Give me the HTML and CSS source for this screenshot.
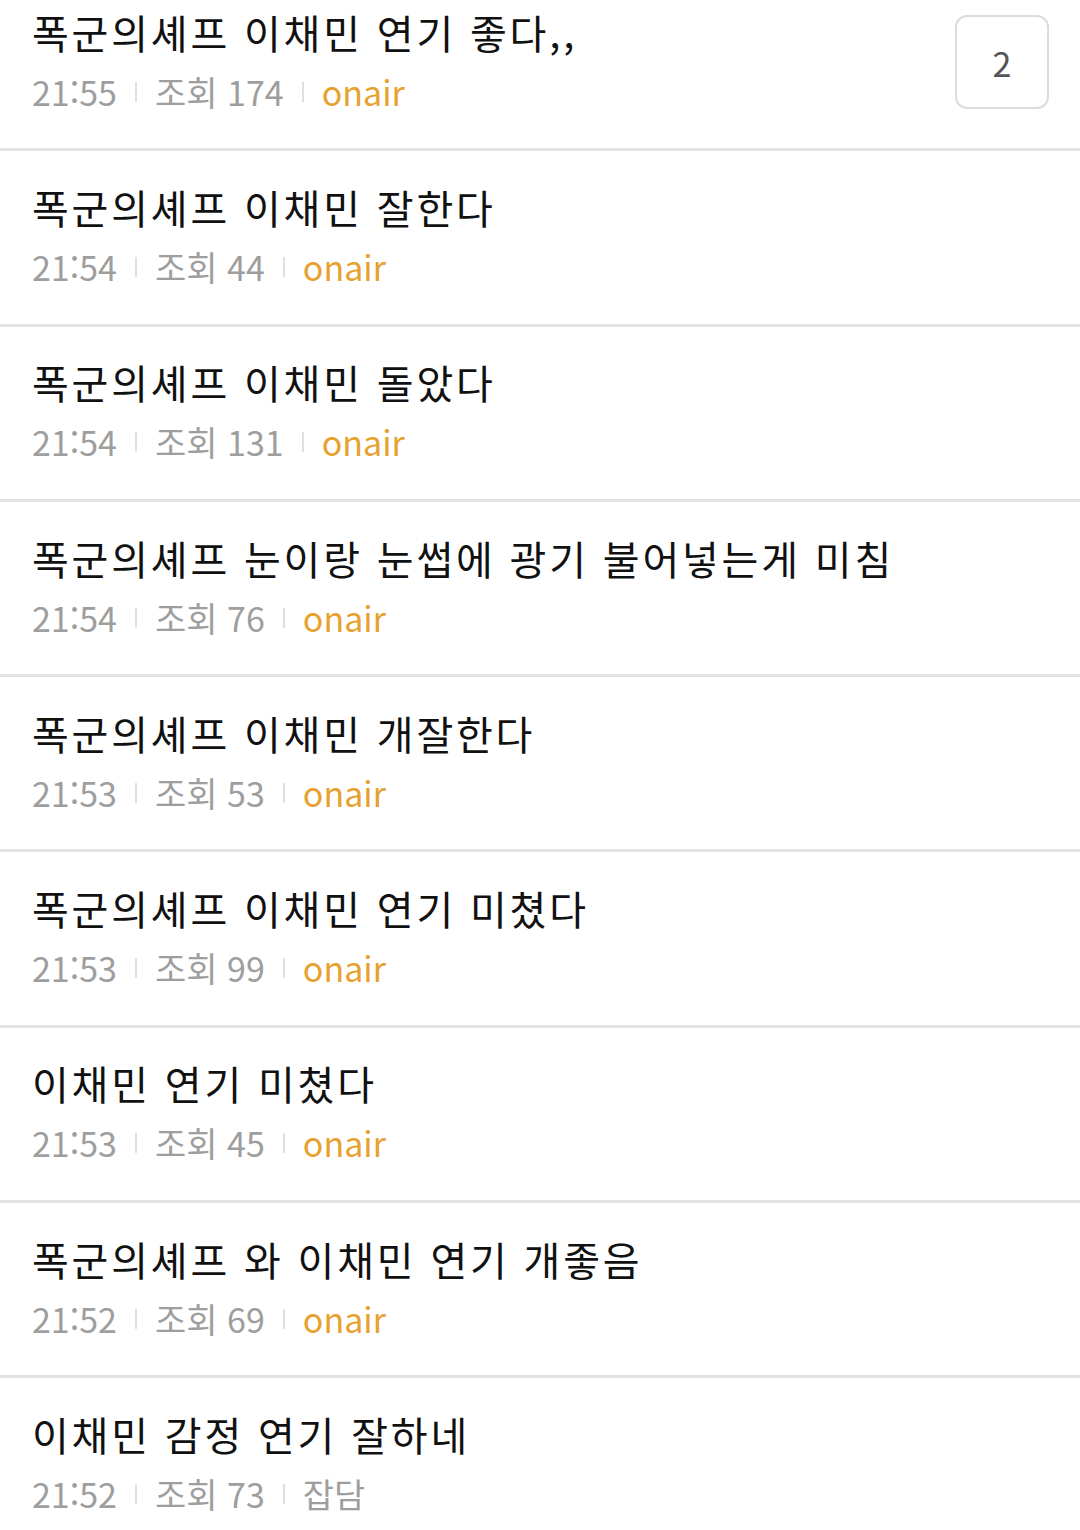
FILE: index.html
```html
<!DOCTYPE html>
<html lang="ko">
<head>
  <meta charset="UTF-8" />
  <meta name="viewport" content="width=device-width, initial-scale=1.0"/>
  <title>게시판</title>
  <link rel="stylesheet" href="styles.css">
</head>
<body>
  <ul class="post-list">
    <li class="post">
      <div class="post-body">
        <div class="post-title">폭군의셰프 이채민 연기 좋다,,</div>
        <div class="post-meta"><span>21:55</span><i class="sep"></i><span>조회 174</span><i class="sep"></i><span class="cat onair">onair</span></div>
      </div>
      <div class="reply-count">2</div>
    </li>
    <li class="post">
      <div class="post-body">
        <div class="post-title">폭군의셰프 이채민 잘한다</div>
        <div class="post-meta"><span>21:54</span><i class="sep"></i><span>조회 44</span><i class="sep"></i><span class="cat onair">onair</span></div>
      </div>
    </li>
    <li class="post">
      <div class="post-body">
        <div class="post-title">폭군의셰프 이채민 돌았다</div>
        <div class="post-meta"><span>21:54</span><i class="sep"></i><span>조회 131</span><i class="sep"></i><span class="cat onair">onair</span></div>
      </div>
    </li>
    <li class="post">
      <div class="post-body">
        <div class="post-title">폭군의셰프 눈이랑 눈썹에 광기 불어넣는게 미침</div>
        <div class="post-meta"><span>21:54</span><i class="sep"></i><span>조회 76</span><i class="sep"></i><span class="cat onair">onair</span></div>
      </div>
    </li>
    <li class="post">
      <div class="post-body">
        <div class="post-title">폭군의셰프 이채민 개잘한다</div>
        <div class="post-meta"><span>21:53</span><i class="sep"></i><span>조회 53</span><i class="sep"></i><span class="cat onair">onair</span></div>
      </div>
    </li>
    <li class="post">
      <div class="post-body">
        <div class="post-title">폭군의셰프 이채민 연기 미쳤다</div>
        <div class="post-meta"><span>21:53</span><i class="sep"></i><span>조회 99</span><i class="sep"></i><span class="cat onair">onair</span></div>
      </div>
    </li>
    <li class="post">
      <div class="post-body">
        <div class="post-title">이채민 연기 미쳤다</div>
        <div class="post-meta"><span>21:53</span><i class="sep"></i><span>조회 45</span><i class="sep"></i><span class="cat onair">onair</span></div>
      </div>
    </li>
    <li class="post">
      <div class="post-body">
        <div class="post-title">폭군의셰프 와 이채민 연기 개좋음</div>
        <div class="post-meta"><span>21:52</span><i class="sep"></i><span>조회 69</span><i class="sep"></i><span class="cat onair">onair</span></div>
      </div>
    </li>
    <li class="post">
      <div class="post-body">
        <div class="post-title">이채민 감정 연기 잘하네</div>
        <div class="post-meta"><span>21:52</span><i class="sep"></i><span>조회 73</span><i class="sep"></i><span class="cat">잡담</span></div>
      </div>
    </li>
  </ul>
</body>
</html>
```

FILE: styles.css
```css
body {
  margin: 0;
  background-color: #ffffff;
  font-family: "Noto Sans CJK KR", "Noto Sans", sans-serif;
  overflow: hidden;
}

.post-list {
  list-style: none;
  margin: -24px 0 0 0;
  padding: 0;
}

.post {
  display: flex;
  align-items: center;
  height: 172.3px;
  padding: 0 31px 0 32px;
  border-bottom: 3px solid #e3e3e3;
}

.post-body {
  flex: 1;
  min-width: 0;
  margin-top: -5px;
}

.post-title {
  font-size: 40px;
  line-height: 52px;
  letter-spacing: 2.8px;
  color: #111111;
  white-space: nowrap;
}

.post-meta {
  display: flex;
  align-items: center;
  margin-top: 12px;
  font-size: 34px;
  line-height: 44px;
  color: #9e9e9e;
}

.sep {
  display: inline-block;
  width: 2px;
  height: 20px;
  margin: 0 18px;
  background-color: #e0e0e0;
}

.cat.onair {
  color: #e7a12e;
}

.reply-count {
  box-sizing: border-box;
  width: 94px;
  height: 94px;
  border: 2px solid #dcdcdc;
  border-radius: 12px;
  display: flex;
  align-items: center;
  justify-content: center;
  font-size: 34px;
  color: #555555;
}
```
